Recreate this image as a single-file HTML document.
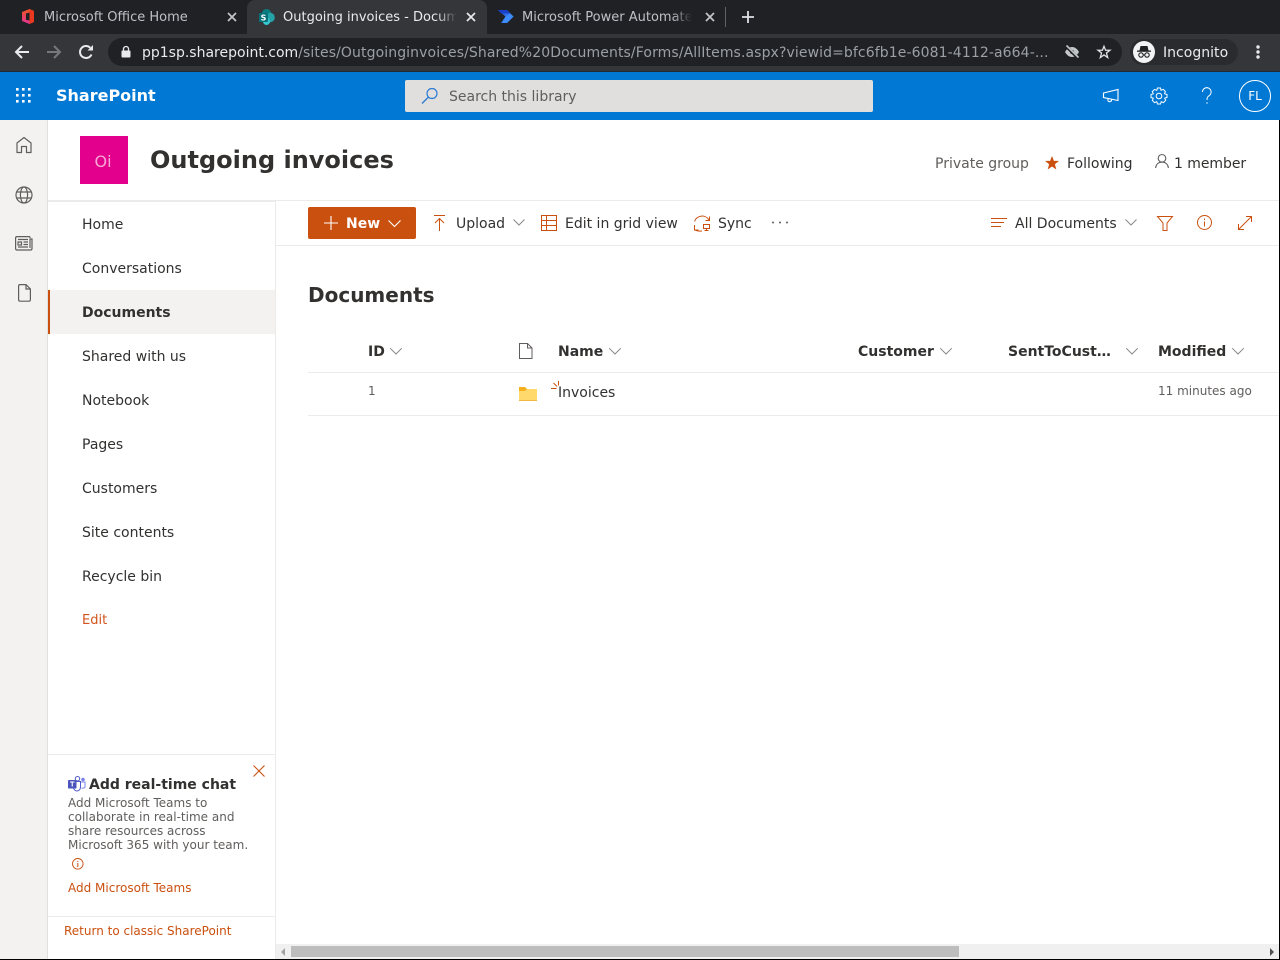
<!DOCTYPE html>
<html><head><meta charset="utf-8"><title>Outgoing invoices</title>
<style>
html,body{margin:0;padding:0;width:1280px;height:960px;overflow:hidden;background:#fff;font-family:"DejaVu Sans","Liberation Sans",sans-serif;}
.a{position:absolute}
.t{position:absolute;white-space:nowrap;line-height:20px;height:20px;color:#323130;font-size:14px}
svg{position:absolute;overflow:visible}
</style></head><body>
<div class="a" style="left:0;top:0;width:1280px;height:960px;overflow:hidden">

<!-- chrome tabs -->
<div class="a" style="left:0;top:0;width:1280px;height:34px;background:#202124"></div>
<div class="a" style="left:0;top:34px;width:1280px;height:37px;background:#35363a"></div>
<div class="a" style="left:0;top:71px;width:1280px;height:1px;background:#1f2a33"></div>
<div class="a" style="left:247px;top:0;width:240px;height:34px;background:#35363a;border-radius:8px 8px 0 0"></div>

<svg style="left:22px;top:9px" width="12" height="15" viewBox="0 0 12 15"><defs><linearGradient id="o" x1="0" y1="0" x2="0" y2="1"><stop offset="0" stop-color="#f0561f"/><stop offset="1" stop-color="#e0329a"/></linearGradient></defs><path d="M0 3L7.500 0 12 2V13L7.500 15 0 12Z" fill="url(#o)"/><path d="M4 4.500L7.500 3.500V11.500L4 10.800Z" fill="#202124"/><path d="M7.500 0L12 2V13L7.500 15Z" fill="#e8391e"/></svg>
<div class="t" style="left:44px;top:8px;font-size:13px;color:#bdc1c6">Microsoft Office Home</div>
<svg style="left:227px;top:12px" width="10" height="10"><path d="M1 1L9 9M9 1L1 9" stroke="#c4c7ca" stroke-width="1.700"/></svg>

<svg style="left:259px;top:9px" width="16" height="16" viewBox="0 0 16 16"><circle cx="7.500" cy="4.800" r="4.800" fill="#0a7d82"/><circle cx="11" cy="8.500" r="4.800" fill="#25a4a8"/><circle cx="7.500" cy="12.500" r="3.500" fill="#37c6d0"/><rect x="0" y="4" width="9" height="9" rx="1" fill="#077078"/><text x="4.500" y="11.500" font-size="8" font-weight="bold" fill="#fff" text-anchor="middle" font-family="DejaVu Sans">S</text></svg>
<div class="t" style="left:283px;top:8px;width:174px;overflow:hidden;font-size:13px;color:#e8eaed">Outgoing invoices - Documents</div>
<div class="a" style="left:437px;top:6px;width:20px;height:20px;background:linear-gradient(90deg,rgba(53,54,58,0),#35363a)"></div>
<svg style="left:466px;top:12px" width="10" height="10"><path d="M1 1L9 9M9 1L1 9" stroke="#e8eaed" stroke-width="1.700"/></svg>

<svg style="left:498px;top:10px" width="16" height="13" viewBox="0 0 16 13"><path d="M0 0H9L15.500 6.500 9 13H3L7.500 6.500Z" fill="#2f6fe8"/><path d="M0 0H9L12 3.500H3Z" fill="#1a3fc8"/><path d="M7.500 6.500L12 3.500 15.500 6.500 9 13H4Z" fill="#3d8bfd"/></svg>
<div class="t" style="left:522px;top:8px;width:170px;overflow:hidden;font-size:13px;color:#bdc1c6">Microsoft Power Automate</div>
<div class="a" style="left:672px;top:6px;width:20px;height:20px;background:linear-gradient(90deg,rgba(32,33,36,0),#202124)"></div>
<svg style="left:705px;top:12px" width="10" height="10"><path d="M1 1L9 9M9 1L1 9" stroke="#c4c7ca" stroke-width="1.700"/></svg>
<div class="a" style="left:725px;top:7px;width:1px;height:20px;background:#5f6368"></div>
<svg style="left:741px;top:10px" width="14" height="14"><path d="M7 1V13M1 7H13" stroke="#dee1e6" stroke-width="1.800"/></svg>

<!-- toolbar -->
<svg style="left:14px;top:44px" width="16" height="16"><path d="M15 8H2M8 2L2 8 8 14" fill="none" stroke="#e8eaed" stroke-width="2"/></svg>
<svg style="left:46px;top:44px" width="16" height="16"><path d="M1 8H14M8 2L14 8 8 14" fill="none" stroke="#76787c" stroke-width="2"/></svg>
<svg style="left:78px;top:44px" width="16" height="16"><path d="M13.500 10.500A6 6 0 1 1 12.200 3.700" fill="none" stroke="#e8eaed" stroke-width="2"/><path d="M9.500 6.500H15V1Z" fill="#e8eaed"/></svg>
<div class="a" style="left:108px;top:38px;width:1014px;height:28px;border-radius:14px;background:#202124"></div>
<svg style="left:121px;top:46px" width="10" height="12"><rect x="0.500" y="4.500" width="9" height="7" rx="1" fill="#e8eaed"/><path d="M2.500 5V3A2.500 2.500 0 0 1 7.500 3V5" fill="none" stroke="#e8eaed" stroke-width="1.300"/></svg>
<div class="t" style="left:142px;top:43px;width:910px;font-size:14px;color:#9aa0a6;letter-spacing:.1px"><span style="color:#e8eaed;letter-spacing:0">pp1sp.sharepoint.com</span>/sites/Outgoinginvoices/Shared%20Documents/Forms/AllItems.aspx?viewid=bfc6fb1e-6081-4112-a664-...</div>
<svg style="left:1064px;top:45px" width="16" height="14" viewBox="0 0 16 14"><path d="M1 7C3 3.500 5.500 2 8 2S13 3.500 15 7C13 10.500 10.500 12 8 12S3 10.500 1 7Z" fill="#c4c7ca"/><circle cx="8" cy="7" r="2" fill="#202124"/><path d="M2 1L14 13" stroke="#202124" stroke-width="3.200"/><path d="M2.500 .500L14.500 12.500" stroke="#c4c7ca" stroke-width="1.600"/></svg>
<svg style="left:1097px;top:45px" width="14" height="14" viewBox="0 0 16 16"><path d="M8 1.500L9.800 6H14.800L10.800 9.200 12.200 14.300 8 11.400 3.800 14.300 5.200 9.200 1.200 6H6.200Z" fill="none" stroke="#e0e2e5" stroke-width="1.500"/></svg>
<div class="a" style="left:1130px;top:39px;width:108px;height:26px;border-radius:13px;background:#2a2b2e"></div>
<div class="a" style="left:1133px;top:41px;width:22px;height:22px;border-radius:50%;background:#f1f3f4"></div>
<svg style="left:1136px;top:45px" width="16" height="14" viewBox="0 0 16 14"><path d="M4.500 1H11.500L12.500 5.500H3.500Z" fill="#202124"/><rect x="1" y="5.500" width="14" height="1.300" fill="#202124"/><circle cx="5" cy="10" r="2.200" fill="none" stroke="#202124" stroke-width="1.100"/><circle cx="11" cy="10" r="2.200" fill="none" stroke="#202124" stroke-width="1.100"/><path d="M7 10H9" stroke="#202124"/></svg>
<div class="t" style="left:1163px;top:43px;font-size:14px;color:#e8eaed;letter-spacing:.02px">Incognito</div>
<svg style="left:1255px;top:45px" width="6" height="14"><circle cx="3" cy="2" r="1.700" fill="#e8eaed"/><circle cx="3" cy="7" r="1.700" fill="#e8eaed"/><circle cx="3" cy="12" r="1.700" fill="#e8eaed"/></svg>

<!-- sharepoint bar -->
<div class="a" style="left:0;top:72px;width:1280px;height:48px;background:#0078d4"></div>
<svg style="left:16px;top:88px" width="16" height="16"><g fill="#fff"><rect x="0" y="0" width="2.600" height="2.600"/><rect x="6" y="0" width="2.600" height="2.600"/><rect x="12" y="0" width="2.600" height="2.600"/><rect x="0" y="6" width="2.600" height="2.600"/><rect x="6" y="6" width="2.600" height="2.600"/><rect x="12" y="6" width="2.600" height="2.600"/><rect x="0" y="12" width="2.600" height="2.600"/><rect x="6" y="12" width="2.600" height="2.600"/><rect x="12" y="12" width="2.600" height="2.600"/></g></svg>
<div class="t" style="left:56px;top:86px;font-size:16px;font-weight:bold;color:#fff">SharePoint</div>
<div class="a" style="left:405px;top:80px;width:468px;height:32px;border-radius:2px;background:#e1dfdd"></div>
<svg style="left:421px;top:87px" width="18" height="18" viewBox="0 0 18 18"><circle cx="11" cy="6.500" r="5" fill="none" stroke="#2b7cd3" stroke-width="1.200"/><path d="M7.500 10L1 16.500" stroke="#2b7cd3" stroke-width="1.300"/></svg>
<div class="t" style="left:449px;top:87px;color:#605e5c;font-size:14px">Search this library</div>
<svg style="left:1102px;top:88px" width="18" height="16" viewBox="0 0 18 16"><path d="M1.500 5L16 1.500V12.500L1.500 9.500ZM6 10.500V12.500C6 14.200 9.500 14.200 9.500 12V11.500" fill="none" stroke="#fff" stroke-width="1.100"/></svg>
<svg style="left:1150px;top:87px" width="18" height="18" viewBox="0 0 18 18"><circle cx="9" cy="9" r="2.800" fill="none" stroke="#fff"/><path d="M7.500 1H10.500L11 3.300 13.200 2.300 15.400 4.500 14.500 6.700 17 7.500V10.500L14.700 11.200 15.700 13.300 13.400 15.600 11.200 14.700 10.500 17H7.500L6.800 14.700 4.600 15.700 2.400 13.400 3.300 11.200 1 10.500V7.500L3.300 6.800 2.300 4.600 4.600 2.400 6.800 3.300Z" fill="none" stroke="#fff"/></svg>
<svg style="left:1200px;top:87px" width="14" height="18" viewBox="0 0 14 18"><path d="M2.500 5A4.300 4.300 0 1 1 9.200 8.600C7.500 9.800 7 10.500 7 13" fill="none" stroke="#fff" stroke-width="1"/><circle cx="7" cy="16" r=".7" fill="#fff"/></svg>
<div class="a" style="left:1239px;top:80px;width:30px;height:30px;border:1px solid #fff;border-radius:50%;color:#fff;font-size:12px;line-height:30px;text-align:center">FL</div>

<!-- left rail -->
<div class="a" style="left:0;top:120px;width:47px;height:840px;background:#f3f2f1"></div>
<div class="a" style="left:47px;top:120px;width:1px;height:840px;background:#e1dfdd"></div>
<svg style="left:15px;top:136px" width="18" height="18" viewBox="0 0 18 18"><path d="M2 16.500V7L9 1.500 16 7V16.500H11.500V10.500H6.500V16.500Z" fill="none" stroke="#605e5c" stroke-width="1.200" stroke-linejoin="round"/></svg>
<svg style="left:14.500px;top:185.500px" width="18" height="18" viewBox="0 0 18 18"><g fill="none" stroke="#605e5c" stroke-width="1.200"><circle cx="9" cy="9" r="8"/><ellipse cx="9" cy="9" rx="3.600" ry="8"/><path d="M1.500 6H16.500M1.500 12H16.500"/></g></svg>
<svg style="left:15px;top:236px" width="18" height="15" viewBox="0 0 18 15"><g fill="none" stroke="#605e5c" stroke-width="1.200"><path d="M15 2V1.500C15 1 14.500 .6 14 .6H2C1 .6 .6 1 .6 2V12.500C.6 13.500 1 14 2 14H15.500C16.500 14 17 13.500 17 12.500V3H15V12"/><rect x="3" y="6" width="3.500" height="3"/><path d="M3 3.500H13M8.500 6H13M8.500 8.500H13M3 11H13"/></g></svg>
<svg style="left:18px;top:284px" width="13" height="18" viewBox="0 0 13 18"><path d="M.6 2C.6 1 1.200 .6 2 .6H8L12.400 5V15.500C12.400 16.500 11.800 17.200 11 17.200H2C1.200 17.200 .6 16.500 .6 15.500ZM8 .6V5H12.400" fill="none" stroke="#605e5c" stroke-width="1.200"/></svg>

<!-- site header -->
<div class="a" style="left:80px;top:136px;width:46px;height:48px;padding-right:2px;background:#e3008c;color:#f7a6d6;font-size:16px;line-height:51px;text-align:center">Oi</div>
<div class="t" style="left:150px;top:146px;height:28px;line-height:28px;font-size:24px;font-weight:bold">Outgoing invoices</div>
<div class="t" style="left:935px;top:154px;color:#605e5c">Private group</div>
<svg style="left:1045px;top:156px" width="14" height="14" viewBox="0 0 14 14"><path d="M7 0L8.900 4.900H14L9.900 8.200 11.300 13.500 7 10.500 2.700 13.500 4.100 8.200 0 4.900H5.100Z" fill="#ca5010"/></svg>
<div class="t" style="left:1067px;top:154px">Following</div>
<svg style="left:1155px;top:154px" width="14" height="15" viewBox="0 0 14 15"><circle cx="7" cy="4.300" r="3.800" fill="none" stroke="#605e5c" stroke-width="1.100"/><path d="M.6 14C1 10.300 3.500 8.100 7 8.100S13 10.300 13.400 14" fill="none" stroke="#605e5c" stroke-width="1.100"/></svg>
<div class="t" style="left:1174px;top:154px;letter-spacing:-.05px">1 member</div>
<div class="a" style="left:48px;top:200px;width:1232px;height:1px;background:#edebe9"></div>
<div class="a" style="left:48px;top:201px;width:227px;height:1px;background:#edebe9"></div>

<!-- nav -->
<div class="a" style="left:275px;top:201px;width:1px;height:759px;background:#edebe9"></div>
<div class="t" style="left:82px;top:215px">Home</div>
<div class="t" style="left:82px;top:259px">Conversations</div>
<div class="a" style="left:48px;top:290px;width:227px;height:44px;background:#f3f2f1"></div>
<div class="a" style="left:48px;top:290px;width:2px;height:44px;background:#ca5010"></div>
<div class="t" style="left:82px;top:303px;font-weight:bold">Documents</div>
<div class="t" style="left:82px;top:347px">Shared with us</div>
<div class="t" style="left:82px;top:391px">Notebook</div>
<div class="t" style="left:82px;top:435px">Pages</div>
<div class="t" style="left:82px;top:479px">Customers</div>
<div class="t" style="left:82px;top:523px">Site contents</div>
<div class="t" style="left:82px;top:567px">Recycle bin</div>
<div class="t" style="left:82px;top:611px;font-size:13px;color:#d2541c">Edit</div>

<!-- teams card -->
<div class="a" style="left:48px;top:754px;width:227px;height:1px;background:#edebe9"></div>
<svg style="left:253px;top:765px" width="12" height="12"><path d="M.5 .5L11.500 11.500M11.500 .5L.5 11.500" stroke="#ca5010" stroke-width="1.100"/></svg>
<svg style="left:68px;top:776px" width="18" height="16" viewBox="0 0 18 16"><circle cx="15" cy="3.500" r="1.800" fill="#7b83eb"/><circle cx="9.500" cy="2.700" r="2.200" fill="none" stroke="#5059c9"/><path d="M5 5.500H12.500V11C12.500 13.500 10.800 15 9 15S5.500 13.500 5.500 11" fill="none" stroke="#5059c9"/><path d="M13 6H17V10.500C17 12 15 12.500 13.500 12" fill="none" stroke="#7b83eb"/><rect x="0" y="4" width="8.500" height="8.500" rx=".8" fill="#4b53bc"/><path d="M2 6H6.500M4.250 6V10.500" stroke="#fff" stroke-width="1.100"/></svg>
<div class="t" style="left:89px;top:775px;font-size:14px;font-weight:bold">Add real-time chat</div>
<div class="t" style="left:68px;top:796px;height:14px;line-height:14px;font-size:12px;color:#605e5c">Add Microsoft Teams to</div>
<div class="t" style="left:68px;top:810px;height:14px;line-height:14px;font-size:12px;color:#605e5c">collaborate in real-time and</div>
<div class="t" style="left:68px;top:824px;height:14px;line-height:14px;font-size:12px;color:#605e5c">share resources across</div>
<div class="t" style="left:68px;top:838px;height:14px;line-height:14px;font-size:12px;color:#605e5c">Microsoft 365 with your team.</div>
<svg style="left:72px;top:858px" width="12" height="12" viewBox="0 0 12 12"><circle cx="5.800" cy="5.800" r="5.300" fill="none" stroke="#ca5010" stroke-width=".9"/><path d="M5.800 5V9M5.800 3V4" stroke="#ca5010"/></svg>
<div class="t" style="left:68px;top:878px;font-size:12px;color:#ca5010">Add Microsoft Teams</div>
<div class="a" style="left:48px;top:916px;width:227px;height:1px;background:#edebe9"></div>
<div class="t" style="left:64px;top:921px;font-size:12px;color:#ca5010">Return to classic SharePoint</div>

<!-- command bar -->
<div class="a" style="left:276px;top:245px;width:1004px;height:1px;background:#edebe9"></div>
<div class="a" style="left:308px;top:207px;width:108px;height:32px;border-radius:2px;background:#ca5010"></div>
<svg style="left:324px;top:216px" width="14" height="14"><path d="M7 0V14M0 7H14" stroke="#fff" stroke-width="1.100"/></svg>
<div class="t" style="left:346px;top:214px;color:#fff;font-weight:bold">New</div>
<svg style="left:388px;top:220px" width="13" height="8"><path d="M.5 .5L6.500 6.500 12.500 .5" fill="none" stroke="#fff" stroke-width="1.100"/></svg>
<svg style="left:434px;top:215px" width="12" height="16" viewBox="0 0 12 16"><path d="M0 .5H11M5.500 16V3.500M1 8L5.500 3.500 10 8" fill="none" stroke="#ca5010" stroke-width="1"/></svg>
<div class="t" style="left:456px;top:214px">Upload</div>
<svg style="left:513px;top:219px" width="12" height="8"><path d="M.5 .5L6 6 11.500 .5" fill="none" stroke="#8a8886"/></svg>
<svg style="left:541px;top:215px" width="16" height="16" viewBox="0 0 16 16"><path d="M.5.5H15.500V15.500H.5ZM.5 5.500H15.500M.5 10.500H15.500M5.500 .5V15.500" fill="none" stroke="#ca5010"/></svg>
<div class="t" style="left:565px;top:214px">Edit in grid view</div>
<svg style="left:694px;top:215px" width="16" height="16" viewBox="0 0 16 16"><path d="M.5 6.500A8 8 0 0 1 15 5M15.500 1.500V5.500H11.500M.5 10V15H4.500M1 15C3 16 5.500 16.300 8 16" fill="none" stroke="#ca5010" stroke-width="1"/><rect x="9.500" y="9.500" width="6" height="4" fill="none" stroke="#ca5010"/><path d="M12.500 13.500V15.500M10.500 15.500H14.500" stroke="#ca5010"/></svg>
<div class="t" style="left:718px;top:214px">Sync</div>
<svg style="left:772px;top:221px" width="16" height="3"><circle cx="1" cy="1.500" r="1" fill="#605e5c"/><circle cx="8" cy="1.500" r="1" fill="#605e5c"/><circle cx="15" cy="1.500" r="1" fill="#605e5c"/></svg>
<svg style="left:991px;top:218px" width="16" height="10"><path d="M0 .5H16M0 4.500H13M0 8.500H10" stroke="#ca5010"/></svg>
<div class="t" style="left:1015px;top:214px">All Documents</div>
<svg style="left:1125px;top:219px" width="12" height="8"><path d="M.5 .5L6 6 11.500 .5" fill="none" stroke="#8a8886"/></svg>
<svg style="left:1157px;top:216px" width="16" height="15" viewBox="0 0 16 15"><path d="M.5.5H15.500L10 7V14.500H6V7Z" fill="none" stroke="#ca5010"/></svg>
<svg style="left:1197px;top:215px" width="15" height="15" viewBox="0 0 15 15"><circle cx="7.500" cy="7.500" r="7" fill="none" stroke="#ca5010"/><path d="M7.500 6.500V11.500M7.500 3.500V5" stroke="#ca5010"/></svg>
<svg style="left:1238px;top:216px" width="14" height="14" viewBox="0 0 14 14"><path d="M.5 13.500L13.500 .5M8 .5H13.500V6M.5 8V13.500H6" fill="none" stroke="#ca5010"/></svg>

<!-- docs -->
<div class="t" style="left:308px;top:283px;height:24px;line-height:24px;font-size:20px;font-weight:bold">Documents</div>
<div class="t" style="left:368px;top:342px;font-weight:bold">ID</div>
<svg style="left:390px;top:348px" width="12" height="7"><path d="M.2 .2L6 6 11.800 .2" fill="none" stroke="#8a8886"/></svg>
<svg style="left:519px;top:343px" width="14" height="16" viewBox="0 0 14 16"><path d="M.5 .5H8.500L13 5V15.500H.5ZM8.500 .5V5H13" fill="none" stroke="#605e5c"/></svg>
<div class="t" style="left:558px;top:342px;font-weight:bold">Name</div>
<svg style="left:609px;top:348px" width="12" height="7"><path d="M.2 .2L6 6 11.800 .2" fill="none" stroke="#8a8886"/></svg>
<div class="t" style="left:858px;top:342px;font-weight:bold">Customer</div>
<svg style="left:940px;top:348px" width="12" height="7"><path d="M.2 .2L6 6 11.800 .2" fill="none" stroke="#8a8886"/></svg>
<div class="t" style="left:1008px;top:342px;font-weight:bold">SentToCust…</div>
<svg style="left:1126px;top:348px" width="12" height="7"><path d="M.2 .2L6 6 11.800 .2" fill="none" stroke="#8a8886"/></svg>
<div class="t" style="left:1158px;top:342px;font-weight:bold">Modified</div>
<svg style="left:1232px;top:348px" width="12" height="7"><path d="M.2 .2L6 6 11.800 .2" fill="none" stroke="#8a8886"/></svg>
<div class="a" style="left:308px;top:372px;width:972px;height:1px;background:#edebe9"></div>
<div class="t" style="left:368px;top:381px;font-size:12px;color:#605e5c">1</div>
<svg style="left:519px;top:387px" width="18" height="14" viewBox="0 0 18 14"><rect x="0" y="2" width="18" height="12" fill="#ffd96b"/><path d="M0 0H6L8 2 6 4H0Z" fill="#f6b01e"/><rect x="0" y="13.300" width="18" height=".7" fill="#f0a830"/></svg>
<svg style="left:551px;top:381px" width="9" height="9" viewBox="0 0 9 9"><path d="M0 7.500H5.500M2.500 2L6 5.500M7.500 0V4.500" stroke="#ca5010"/></svg>
<div class="t" style="left:558px;top:383px">Invoices</div>
<div class="t" style="left:1158px;top:381px;font-size:12px;color:#605e5c">11 minutes ago</div>
<div class="a" style="left:308px;top:415px;width:972px;height:1px;background:#edebe9"></div>

<!-- scrollbar -->
<div class="a" style="left:276px;top:944px;width:1004px;height:15px;background:#f0f0f0"></div>
<div class="a" style="left:291px;top:946px;width:668px;height:11px;background:#bdbdbd"></div>
<svg style="left:280px;top:948px" width="6" height="8"><path d="M5 0V8L1 4Z" fill="#a3a3a3"/></svg>
<svg style="left:1269px;top:948px" width="6" height="8"><path d="M1 0V8L5 4Z" fill="#505050"/></svg>
<div class="a" style="left:0;top:959px;width:1280px;height:1px;background:#000"></div>
<div class="a" style="left:1279px;top:120px;width:1px;height:840px;background:#000"></div>
</div>
</body></html>
